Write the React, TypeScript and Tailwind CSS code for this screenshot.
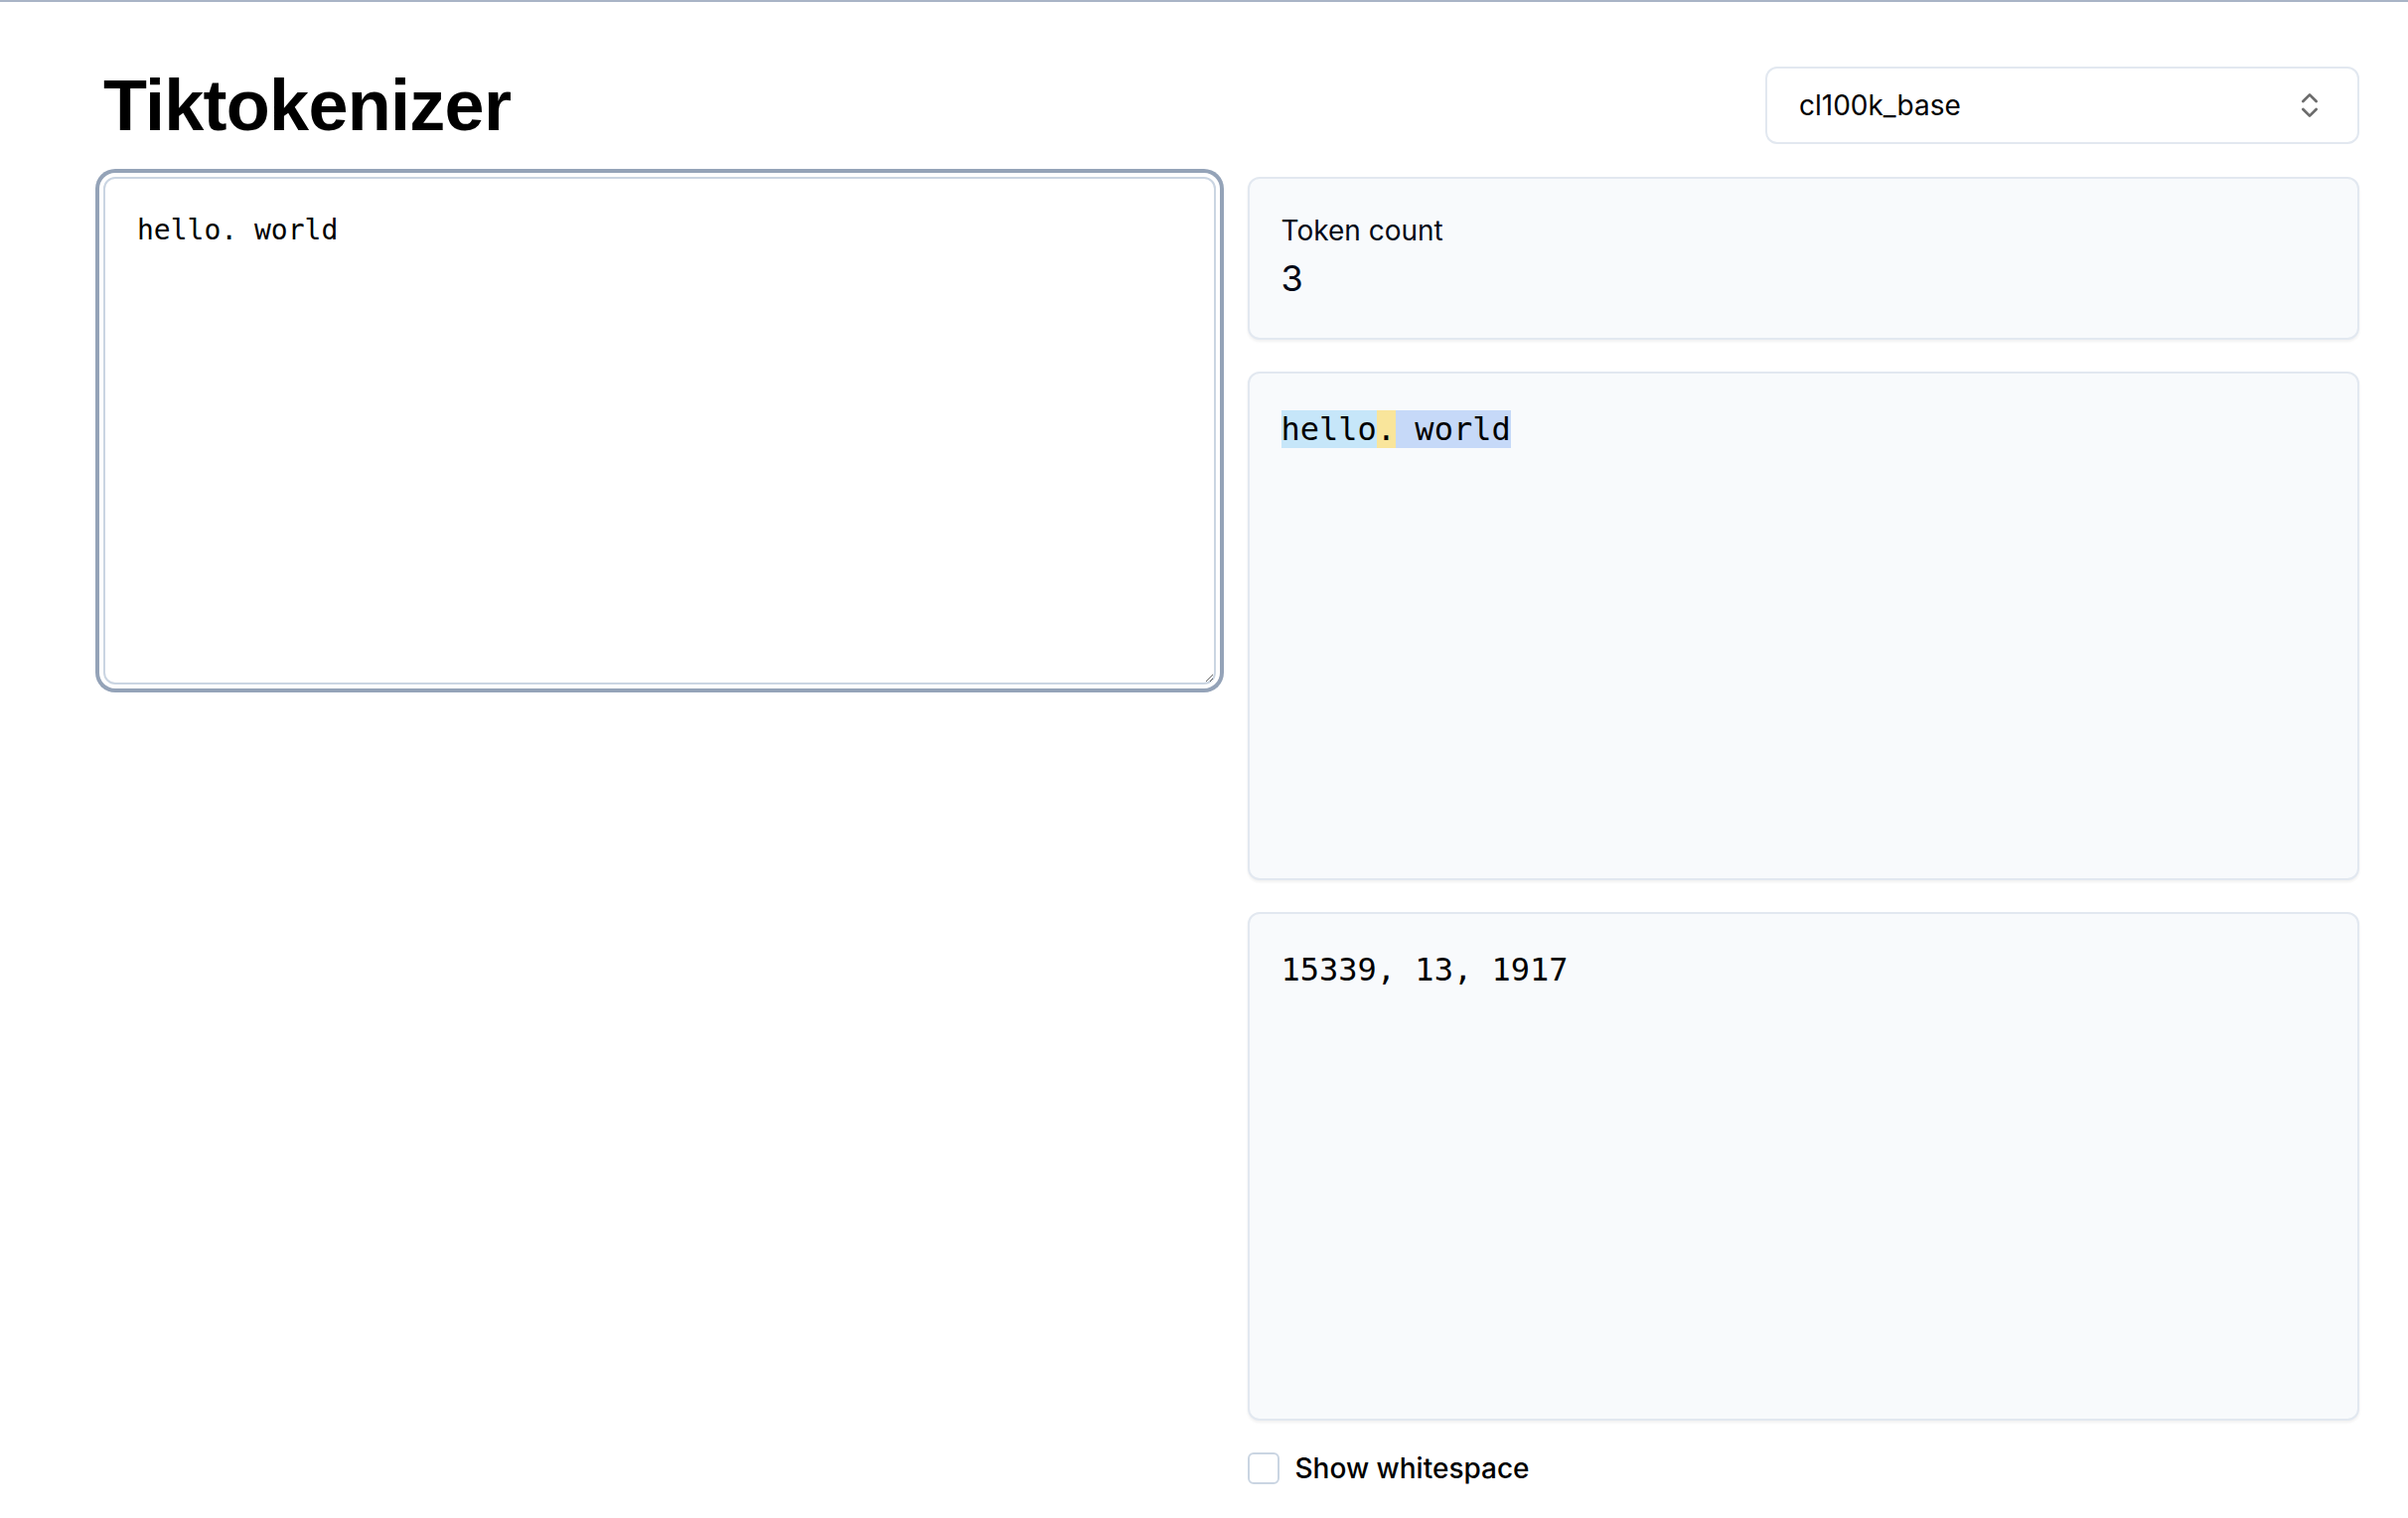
import { useState } from "react";

const TOKENS: { text: string; color: string }[] = [
  { text: "hello", color: "bg-[#c6e6f9]" },
  { text: ".", color: "bg-[#f9e59b]" },
  { text: " world", color: "bg-[#c6d9f8]" },
];

const IDS = [15339, 13, 1917];

function ChevronsUpDown() {
  return (
    <svg
      width="32"
      height="32"
      viewBox="0 0 24 24"
      fill="none"
      stroke="currentColor"
      strokeWidth="2"
      strokeLinecap="round"
      strokeLinejoin="round"
      className="shrink-0 text-[#6b6b6b]"
    >
      <path d="m7 15 5 5 5-5" />
      <path d="m7 9 5-5 5 5" />
    </svg>
  );
}

export default function App() {
  const [text, setText] = useState("hello. world");
  const [showWhitespace, setShowWhitespace] = useState(false);

  return (
    <div className="min-h-[1528px] w-full border-t-2 border-[#a9b4c6] bg-white pl-[104px] pr-[49px] pt-16 text-[#020817] font-['Inter',sans-serif]">
      <header className="flex h-20 items-center justify-between">
        <h1 className="font-['Liberation_Sans',Arial,sans-serif] text-[72px] font-bold leading-[80px] tracking-[-0.01em] text-black">
          Tiktokenizer
        </h1>
        <button className="flex h-[78px] w-[598px] items-center justify-between rounded-[12px] border-2 border-slate-200 bg-white px-8 text-[28px] leading-10 text-black">
          <span>cl100k_base</span>
          <ChevronsUpDown />
        </button>
      </header>

      <main className="mt-8 grid grid-cols-2 gap-8">
        <section>
          <textarea
            value={text}
            onChange={(e) => setText(e.target.value)}
            className="block h-[511px] w-full resize-y rounded-[12px] border-2 border-slate-300 bg-white p-8 font-['DejaVu_Sans_Mono',monospace] text-[28px] leading-10 text-black outline-none ring-4 ring-[#94a3b8] ring-offset-4 ring-offset-white"
          />
        </section>

        <section className="flex flex-col gap-8">
          <div className="rounded-[12px] border-2 border-slate-200 bg-slate-50 p-8 shadow-[0_2px_3px_rgba(0,0,0,0.06)]">
            <p className="text-[28px] leading-10">Token count</p>
            <p className="text-[36px] leading-[56px]">{TOKENS.length}</p>
          </div>

          <div className="h-[512px] rounded-[12px] border-2 border-slate-200 bg-slate-50 p-8 shadow-[0_2px_3px_rgba(0,0,0,0.06)]">
            <pre className="whitespace-pre-wrap font-['DejaVu_Sans_Mono',monospace] text-[32px] leading-[48px] text-black">
              {TOKENS.map((t, i) => (
                <span key={i} className={t.color}>
                  {showWhitespace ? t.text.replace(/ /g, "⋅") : t.text}
                </span>
              ))}
            </pre>
          </div>

          <div className="h-[512px] rounded-[12px] border-2 border-slate-200 bg-slate-50 p-8 shadow-[0_2px_3px_rgba(0,0,0,0.06)]">
            <pre className="whitespace-pre-wrap font-['DejaVu_Sans_Mono',monospace] text-[32px] leading-[48px] text-black">
              {IDS.join(", ")}
            </pre>
          </div>

          <label className="flex h-8 items-center gap-4">
            <input
              type="checkbox"
              checked={showWhitespace}
              onChange={(e) => setShowWhitespace(e.target.checked)}
              className="h-8 w-8 appearance-none rounded-[6px] border-2 border-slate-300 bg-white"
            />
            <span className="text-[28px] font-medium leading-10 text-black">Show whitespace</span>
          </label>
        </section>
      </main>
    </div>
  );
}
